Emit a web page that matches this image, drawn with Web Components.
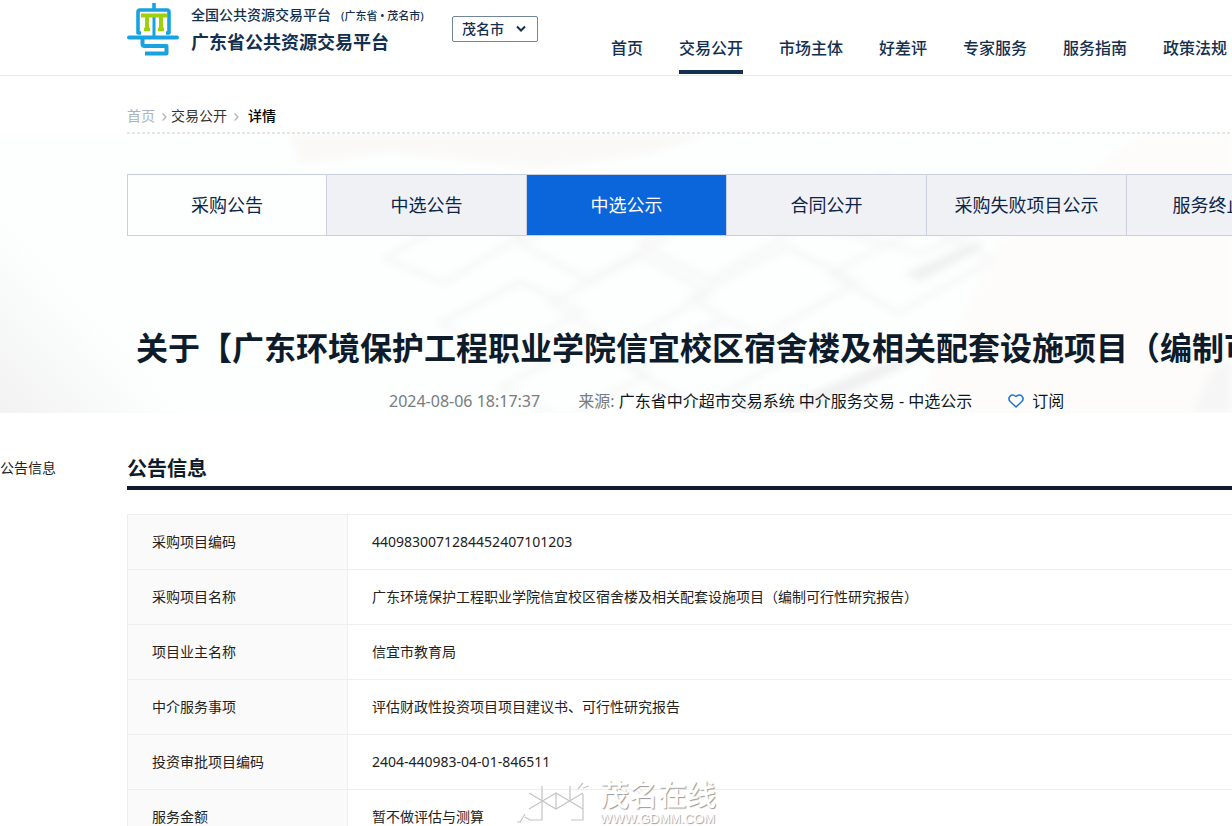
<!DOCTYPE html>
<html lang="zh-CN">
<head>
<meta charset="utf-8">
<title>广东省公共资源交易平台</title>
<style>
body{margin:0;background:#fff;color:#333;font-family:"Noto Sans","Noto Sans CJK SC",sans-serif;font-size:14px;line-height:20px;overflow:hidden;--gutter:127px;--navy:#14304f;--ink:#0d1b2a}
</style>
</head>
<body>
<gp-page></gp-page>
<script>
const define=(name,html)=>customElements.define(name,class extends HTMLElement{
  constructor(){super();const t=document.createElement('template');t.innerHTML=html;this.attachShadow({mode:'open'}).append(t.content.cloneNode(true));}
});

define('gp-logo',`<style>:host{display:block;width:52px;height:54px}svg{display:block}</style>
<svg width="52" height="54" viewBox="0 0 52 54" fill="none" stroke="#18a2e0" stroke-width="4">
<path d="M27 0v6M14 30h-3V9q0-2 2-2h27q2 0 2 2v21h-3" stroke-linejoin="round" stroke-width="3.6"/>
<path d="M27 14v21" stroke-width="3"/><path d="M2 34.500h48" stroke-width="4" stroke-linecap="round"/>
<path d="M15.500 36v5q0 2 2 2h22v7.500H18" stroke-linejoin="round"/>
<path d="M14 12.500h26M20 13v13M34 13v13" stroke="#9fd00c"/><path d="M17 26.500h6M31 26.500h6" stroke="#9fd00c" stroke-width="3.500"/></svg>`);

define('gp-city-select',`<style>:host{display:block}
div{position:relative;display:flex}
select{appearance:none;width:86px;height:26px;box-sizing:border-box;border:1px solid #72869b;border-radius:2px;background:#fff;color:var(--navy);font:500 14px/20px "Noto Sans CJK SC",sans-serif;padding:0 24px 2px 9px}
svg{position:absolute;right:12px;top:9px;pointer-events:none}</style>
<div><select aria-label="选择城市"><option>茂名市</option></select>
<svg width="10" height="8" viewBox="0 0 10 8" fill="none" stroke="#14304f" stroke-width="2"><path d="M1 1.5l4 4 4-4"/></svg></div>`);

define('gp-nav-link',`<style>:host{display:block;flex:none}
a{display:block;height:38px;box-sizing:border-box;color:var(--navy);font-size:16px;line-height:24px;font-weight:500;text-decoration:none;white-space:nowrap}
:host([active]) a{border-bottom:4px solid var(--navy)}</style><a href="#"><slot></slot></a>`);

define('gp-header',`<style>:host{display:flex;height:75px;border-bottom:1px solid #e8eaec;padding-left:var(--gutter);align-items:flex-start}
gp-logo{margin-top:3px;flex:none}
.brand{margin:5px 0 0 12px;width:261px;flex:none;color:var(--navy);font-weight:500;white-space:nowrap}
.top{display:flex;gap:10px;height:20px;line-height:20px}
small{font-size:11px;line-height:22px}
h1{margin:4px 0 0;font-size:18px;line-height:26px;font-weight:700}
gp-city-select{margin-top:16px;flex:none}
nav{display:flex;gap:36px;margin:36px 0 0 73px}</style>
<gp-logo></gp-logo>
<div class="brand"><div class="top"><span>全国公共资源交易平台</span><small>(广东省 • 茂名市)</small></div><h1>广东省公共资源交易平台</h1></div>
<gp-city-select></gp-city-select>
<nav><gp-nav-link>首页</gp-nav-link><gp-nav-link active>交易公开</gp-nav-link><gp-nav-link>市场主体</gp-nav-link><gp-nav-link>好差评</gp-nav-link><gp-nav-link>专家服务</gp-nav-link><gp-nav-link>服务指南</gp-nav-link><gp-nav-link>政策法规</gp-nav-link></nav>`);

define('gp-breadcrumb',`<style>:host{display:block;margin-left:var(--gutter);padding:30px 0 8px;background:repeating-linear-gradient(90deg,#e4e7e6 0 3px,transparent 3px 5px) left bottom/100% 2px no-repeat}
nav{display:flex;align-items:center}
a{color:#333;text-decoration:none}a.home{color:#a9b3c4}b{font-weight:500;color:#000}
svg{margin:2px 4px 0 7px}svg.last{margin-right:9px}</style>
<nav aria-label="面包屑"><a class="home" href="#">首页</a><svg width="5" height="8" viewBox="0 0 5 8" fill="none" stroke="#b5b5b5" stroke-width="1.3"><path d="M.5.5L4 4 .5 7.5"/></svg><a href="#">交易公开</a><svg class="last" width="5" height="8" viewBox="0 0 5 8" fill="none" stroke="#b5b5b5" stroke-width="1.3"><path d="M.5.5L4 4 .5 7.5"/></svg><b>详情</b></nav>`);

define('gp-tab',`<style>:host{display:block;flex:none;width:200px;box-sizing:border-box;border-right:1px solid #cbd1dc;background:#f0f1f4}
a{display:block;text-align:center;line-height:60px;font-size:18px;color:#0c2548;text-decoration:none;white-space:nowrap}
:host([plain]){background:#fdfffe}:host([active]){background:#0b66db}:host([active]) a{color:#fff}</style><a href="#"><slot></slot></a>`);

define('gp-tabs',`<style>:host{display:flex;margin-left:var(--gutter);border:1px solid #cbd1dc;border-right:0;overflow:hidden}gp-tab:first-of-type{width:199px}</style>
<gp-tab plain>采购公告</gp-tab><gp-tab>中选公告</gp-tab><gp-tab active>中选公示</gp-tab><gp-tab>合同公开</gp-tab><gp-tab>采购失败项目公示</gp-tab><gp-tab>服务终止公告</gp-tab>`);

define('gp-backdrop',`<style>:host{display:block;position:absolute;inset:0;z-index:-1;overflow:hidden;background:#fdfefe}svg{width:100%;height:100%;display:block}</style>
<svg viewBox="0 0 1232 280" preserveAspectRatio="none" aria-hidden="true">
<defs><filter id="soft" x="-20%" y="-20%" width="140%" height="140%"><feGaussianBlur stdDeviation="4"/></filter>
<linearGradient id="corner" x1="0" y1="1" x2=".7" y2=".3"><stop offset="0" stop-color="#f2f2f2"/><stop offset=".6" stop-color="#fdfefe"/></linearGradient></defs>
<path d="M0 40L220 280H0z" fill="url(#corner)"/>
<g filter="url(#soft)"><path d="M290 0h420l-60 20-110 14-150-16-90 12z" fill="#faf9f8"/>
<g fill="#fdfefe" stroke="#f6f6f6" stroke-width="5" stroke-linejoin="round">
<path d="M385 125l75-45 62 22-78 48zM520 110l85-40 65 32-82 45zM640 110l90-50 68 35-88 52zM790 85l95-45 106 50-70 30zM440 190l80-42 62 30-80 46zM550 170l92-48 68 38-92 52zM690 165l96-52 72 36-98 56zM830 140l92-48 72 34-96 54zM500 255l84-46 64 32-84 46zM630 235l94-50 70 36-94 54z"/></g>
<path d="M730 262l42 14 145-60v12l-110 50h-70zM905 140l75-34v10l-60 32z" fill="#f0f0f1"/>
<path d="M1000 110l140-110h92v280H920q5-40 40-90z" fill="#fdfcfb"/><path d="M1210 240l22-14v54h-40z" fill="#f7f6f6"/></g></svg>`);

define('gp-meta',`<style>:host{display:flex;align-items:center;font-size:16px;line-height:24px;color:#777c80;white-space:nowrap}
.source{margin-left:38px}.source span{color:#0d1720}
button{display:flex;align-items:center;gap:8px;margin-left:36px;padding:0;border:0;background:none;font:inherit;color:#0d1720}</style>
<time>2024-08-06 18:17:37</time><div class="source">来源: <span>广东省中介超市交易系统 中介服务交易 - 中选公示</span></div>
<button type="button"><svg width="16" height="14" viewBox="0 0 16 14" fill="none" stroke="#1b70dd" stroke-width="1.5"><path d="M8 13L2.200 7.500C-1 4 3 -1.500 8 2.500c5-4 9 1.500 5.800 5z" stroke-linejoin="round"/></svg>订阅</button>`);

define('gp-hero',`<style>:host{display:block;position:relative;z-index:0;height:279px}
.space{height:40px}
h2{margin:89px 0 0;padding-left:136px;font-size:32px;line-height:46px;font-weight:700;color:var(--ink);white-space:nowrap;overflow:hidden}
gp-meta{margin:18px 0 0 389px}</style>
<gp-backdrop></gp-backdrop><div class="space"></div><gp-tabs></gp-tabs>
<h2>关于【广东环境保护工程职业学院信宜校区宿舍楼及相关配套设施项目（编制可行性研究报告）】</h2><gp-meta></gp-meta>`);

define('gp-info-table',`<style>:host{display:block}
table{width:100%;border-collapse:collapse;color:#222}
th,td{height:54px;padding:0 24px;text-align:left;font-weight:400;border:1px solid #eee;border-right:0}
th{width:171px;background:#fafafa}tr{height:55px}</style>
<table><tbody>
<tr><th scope="row">采购项目编码</th><td>4409830071284452407101203</td></tr>
<tr><th scope="row">采购项目名称</th><td>广东环境保护工程职业学院信宜校区宿舍楼及相关配套设施项目（编制可行性研究报告）</td></tr>
<tr><th scope="row">项目业主名称</th><td>信宜市教育局</td></tr>
<tr><th scope="row">中介服务事项</th><td>评估财政性投资项目项目建议书、可行性研究报告</td></tr>
<tr><th scope="row">投资审批项目编码</th><td>2404-440983-04-01-846511</td></tr>
<tr><th scope="row">服务金额</th><td>暂不做评估与测算</td></tr>
</tbody></table>`);

define('gp-watermark',`<style>:host{position:absolute;left:516px;top:780px;display:flex;gap:8px;color:#fff;text-shadow:1px 1px 1px #999}
svg{display:block}div{white-space:nowrap}strong{display:block;font:500 29px/32px "Liberation Sans","Noto Sans CJK SC",sans-serif}span{display:block;font:13px/14px "Liberation Sans",sans-serif}</style>
<svg width="76" height="44" viewBox="0 0 76 44" fill="none" stroke="#c4c4c4" stroke-width="1.200"><path d="M26 6v34H13M13 13l27 16 27-16M13 29l27-16v16M40 13l27 16M54 6v14M67 14v26H55M4 42l5-8M9 37l5 3M1 42h4M62 9l5-6M67 8l6-2M78 2l2 1"/></svg>
<div><strong>茂名在线</strong><span>WWW.GDMM.COM</span></div>`);

define('gp-section',`<style>:host{display:grid;grid-template-columns:var(--gutter) minmax(0,1fr);padding-top:41px}
aside a{display:block;margin-top:4px;color:#222;text-decoration:none}
h3{margin:0 0 24px;font-size:20px;line-height:30px;padding-bottom:2px;border-bottom:4px solid var(--ink);color:var(--ink);font-weight:700}</style>
<aside><a href="#">公告信息</a></aside><section><h3>公告信息</h3><gp-info-table></gp-info-table></section>`);

define('gp-page',`<style>:host{display:block;position:relative;height:100vh;overflow:hidden}</style>
<gp-header></gp-header><gp-breadcrumb></gp-breadcrumb><gp-hero></gp-hero><gp-section></gp-section><gp-watermark></gp-watermark>`);
</script>
</body>
</html>
